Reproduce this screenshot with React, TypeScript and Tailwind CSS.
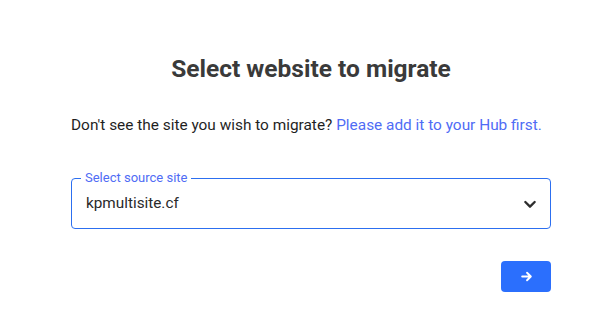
export default function App() {
  return (
    <div
      className="min-h-[336px] w-[610px] bg-white pl-[71px] pr-[59px] pt-[54px]"
      style={{ fontFamily: "Roboto, 'Liberation Sans', sans-serif" }}
    >
      <h1 className="text-center text-[24.5px] font-bold leading-[30px] text-[#3a3a3a]">
        Select website to migrate
      </h1>
      <p className="mt-[31px] whitespace-nowrap text-[15.4px] leading-[20px] text-[#1f1f1f]">
        Don't see the site you wish to migrate?{" "}
        <a href="#" className="text-[#4f6cf5]">
          Please add it to your Hub first.
        </a>
      </p>

      {/* source site select */}
      <div className="relative mt-[43px] flex h-[51px] items-center justify-between rounded-[4px] border border-[#2c6ff0] pl-[14px] pr-[12px]">
        <span className="absolute -top-[9px] left-[9px] bg-white px-[4px] text-[13px] leading-[16px] text-[#4f6cf5]">
          Select source site
        </span>
        <span className="text-[15.3px] text-[#2a2a2a]">kpmultisite.cf</span>
        <svg width="16" height="16" viewBox="0 0 24 24" fill="none" stroke="#2d2d2d" strokeWidth="3.5" strokeLinecap="round" strokeLinejoin="round">
          <path d="M5 9l7 7 7-7" />
        </svg>
      </div>

      <div className="mt-[32px] flex justify-end">
        <button className="flex h-[31px] w-[50px] items-center justify-center rounded-[4px] bg-[#2b6ffd]">
          <svg width="13" height="13" viewBox="0 0 24 24" fill="none" stroke="white" strokeWidth="3.5" strokeLinecap="round" strokeLinejoin="round">
            <path d="M4 12h15M13 5l7 7-7 7" />
          </svg>
        </button>
      </div>
    </div>
  );
}
